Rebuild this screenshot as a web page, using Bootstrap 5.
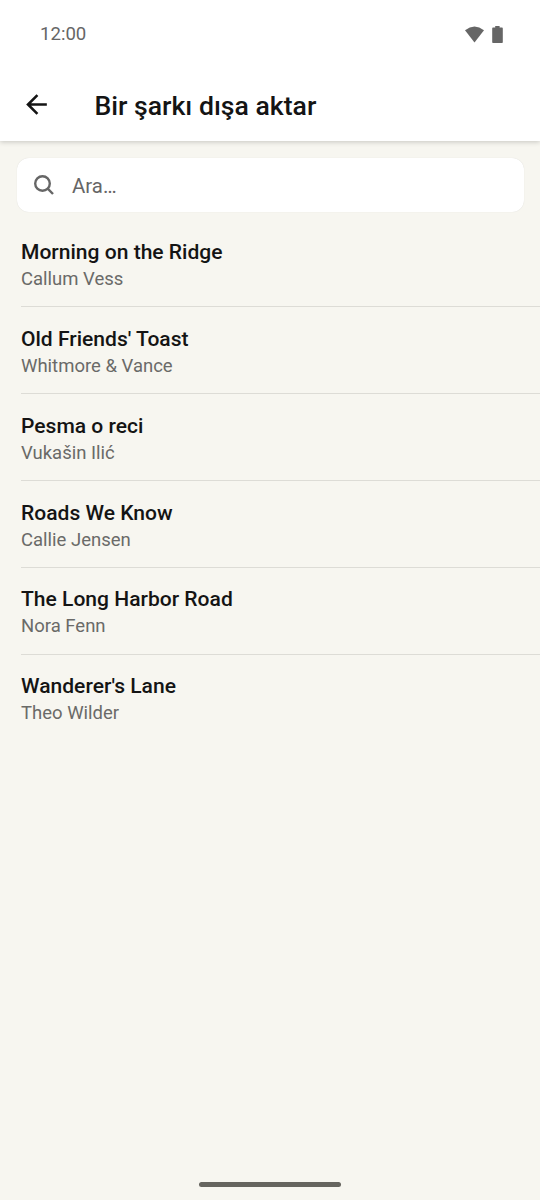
<!DOCTYPE html>
<html lang="tr">
<head>
<meta charset="utf-8">
<meta name="viewport" content="width=device-width, initial-scale=1">
<title>Bir şarkı dışa aktar</title>
<link href="https://cdn.jsdelivr.net/npm/bootstrap@5.3.0/dist/css/bootstrap.min.css" rel="stylesheet">
<style>
body{font-family:Roboto,"Noto Sans",sans-serif;background:#f7f6f0;color:#141414}
.screen{height:1200px}
.topbar{height:141px;box-shadow:0 1px 5px rgba(0,0,0,.2)}
.status{height:68px;padding:0 37px 0 40px;font-size:18.6px;color:#666}
.clock{padding-top:2px}
.appbar{height:73px;padding-left:21px}
.appbar h1{font-size:26.6px;line-height:32px;font-weight:500;margin-left:42.5px;padding-top:2px}
.search{height:54px;margin:17px 16px 0 17px;padding-left:16px;border-radius:12px;box-shadow:0 0 1px rgba(0,0,0,.14);font-size:20.4px;color:#666}
.search span{margin-left:15px;padding-top:3px}
.song{height:86.9px;padding-top:18.5px}
.songs{padding-left:21px;margin-top:8.4px}
.song:not(:last-child){border-bottom:1.5px solid #dddcd6}
.title{font-size:21.05px;line-height:25px;font-weight:500}
.artist{font-size:18.5px;line-height:26px;margin-top:2px;color:#6a6a68}
.homebar{width:142px;height:5px;margin-bottom:13px;background:#66655f}
</style>
</head>
<body>
<div class="screen d-flex flex-column overflow-hidden">
<header class="topbar bg-white flex-shrink-0">
<div class="status d-flex align-items-center justify-content-between">
<span class="clock">12:00</span>
<span class="d-flex align-items-center gap-2">
<svg width="19" height="17" viewBox="0 0 19 17" fill="#666"><path d="M0 4.2Q9.5-3.2 19 4.2L9.5 16.5Z"/></svg>
<svg width="11" height="17" viewBox="0 0 11 17" fill="#666"><path d="M3.2 1.6V0h4.4v1.6H10q.8 0 .8.8v13.8q0 .8-.8.8H1q-.8 0-.8-.8V2.4q0-.8.8-.8Z"/></svg>
</span>
</div>
<div class="appbar d-flex align-items-center">
<svg width="31" height="31" viewBox="0 0 24 24"><path fill="#141414" d="M20 11H7.83l5.59-5.59L12 4l-8 8 8 8 1.41-1.41L7.83 13H20z"/></svg>
<h1 class="mb-0">Bir şarkı dışa aktar</h1>
</div>
</header>
<main class="flex-grow-1">
<div class="search bg-white d-flex align-items-center">
<svg width="24" height="24" viewBox="0 0 24 24" fill="none" stroke="#666" stroke-width="2.4"><circle cx="9.5" cy="10.5" r="7.3"/><path d="m14.7 15.7 5.3 5.3"/></svg>
<span>Ara…</span>
</div>
<div class="songs">
<div class="song"><div class="title">Morning on the Ridge</div><div class="artist">Callum Vess</div></div>
<div class="song"><div class="title">Old Friends' Toast</div><div class="artist">Whitmore &amp; Vance</div></div>
<div class="song"><div class="title">Pesma o reci</div><div class="artist">Vukašin Ilić</div></div>
<div class="song"><div class="title">Roads We Know</div><div class="artist">Callie Jensen</div></div>
<div class="song"><div class="title">The Long Harbor Road</div><div class="artist">Nora Fenn</div></div>
<div class="song"><div class="title">Wanderer's Lane</div><div class="artist">Theo Wilder</div></div>
</div>
</main>
<div class="homebar rounded-pill mx-auto flex-shrink-0"></div>
</div>
<script src="https://cdn.jsdelivr.net/npm/bootstrap@5.3.0/dist/js/bootstrap.bundle.min.js"></script>
</body>
</html>
